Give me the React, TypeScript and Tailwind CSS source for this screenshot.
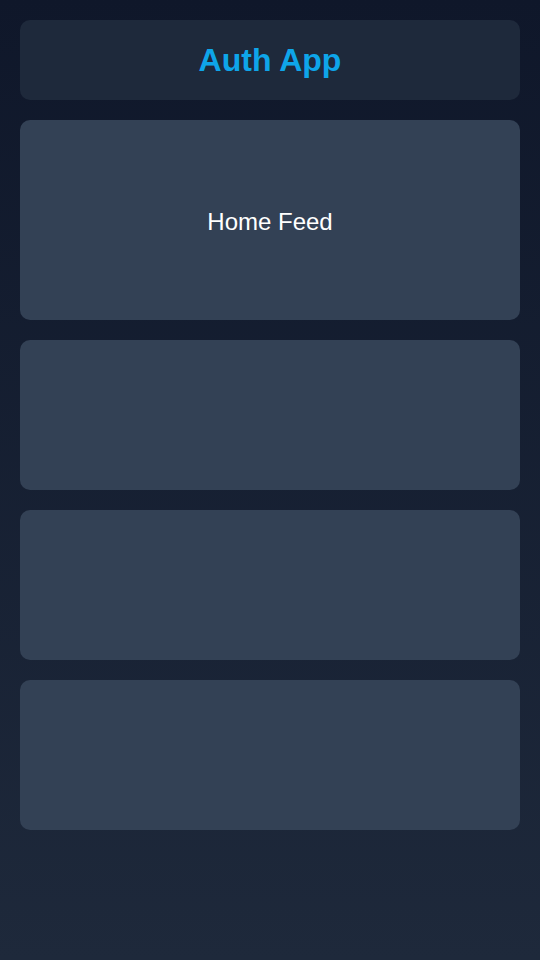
import React from 'react';

const Card: React.FC<{ tall?: boolean; children?: React.ReactNode }> = ({ tall, children }) => (
    <div
        className={`bg-[#334155] rounded-[10px] flex items-center justify-center ${tall ? 'h-[200px]' : 'h-[150px]'}`}
    >
        {children}
    </div>
);

export default function App() {
    return (
        <div
            className="min-h-[960px] w-full bg-gradient-to-b from-[#0f172a] to-[#1e293b] p-5 flex flex-col gap-5"
            style={{ fontFamily: '"Liberation Sans", Arial, sans-serif' }}
        >
            {/* Header */}
            <div className="h-20 bg-[#1e293b] rounded-[10px] flex items-center justify-center">
                <h1 className="text-[32px] font-bold text-[#0ea5e9] leading-none">Auth App</h1>
            </div>

            <Card tall>
                <span className="text-2xl text-white leading-none pt-1">Home Feed</span>
            </Card>
            <Card />
            <Card />
            <Card />
        </div>
    );
}
